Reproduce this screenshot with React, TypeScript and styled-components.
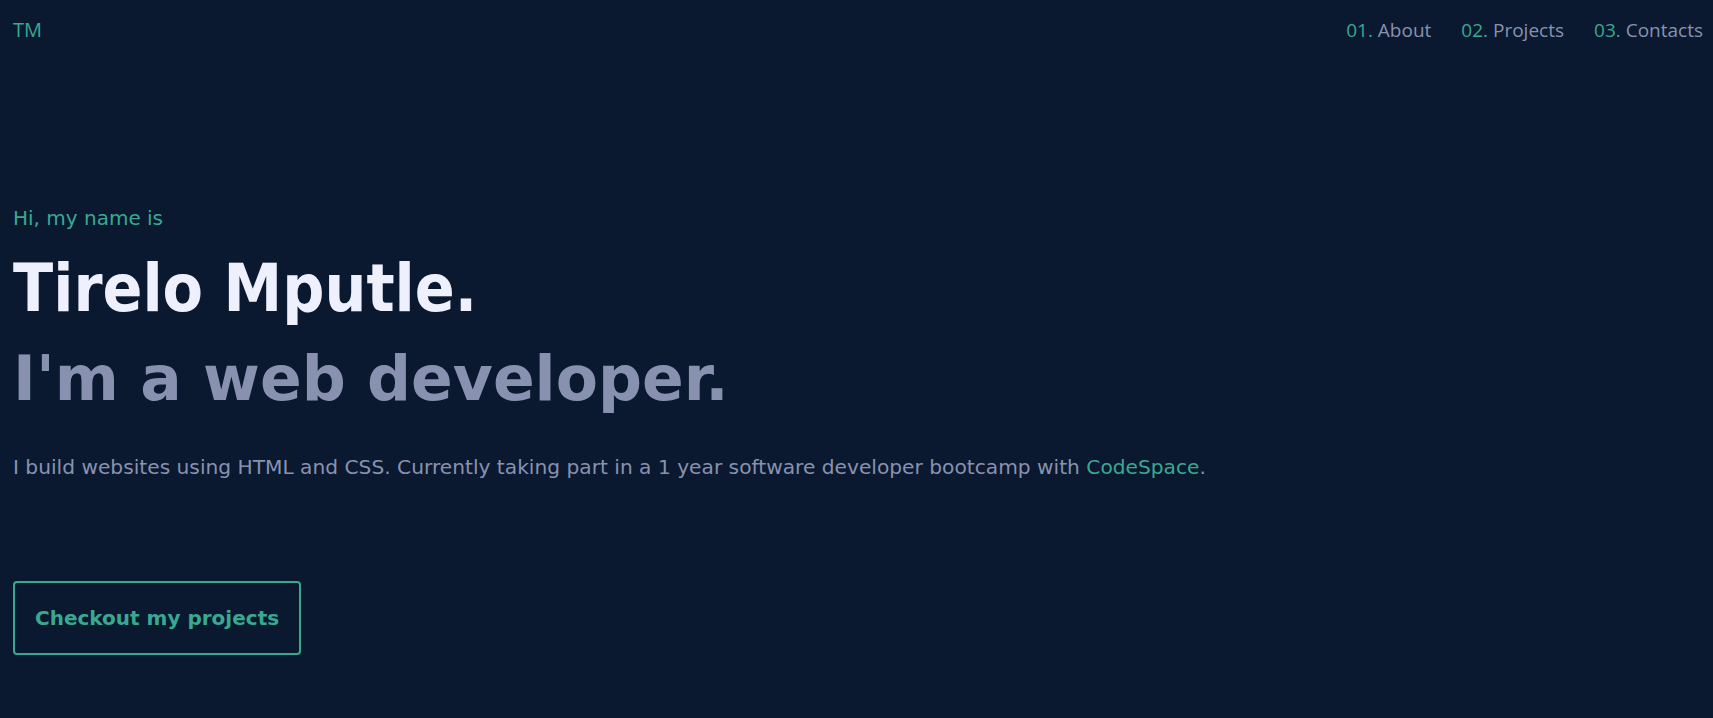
import React from 'react';
import styled, { createGlobalStyle } from 'styled-components';

const pallette = {
  navy: '#0a192f',
  green: '#3aa891',
  slate: '#8892b0',
  white: '#eef0fd',
};

const GlobalStyle = createGlobalStyle`
  html, body {
    margin: 0;
    padding: 0;
    background: ${pallette.navy};
  }
  body {
    font-family: 'DejaVu Sans', Verdana, sans-serif;
    min-height: 718px;
  }
`;

const Page = styled.div`
  min-height: 718px;
  background: ${pallette.navy};
  padding: 0 10px 0 13px;
  box-sizing: border-box;
`;

const Header = styled.header`
  display: flex;
  justify-content: space-between;
  align-items: baseline;
  padding-top: 16px;
`;

const Logo = styled.a`
  font-family: 'Open Sans', 'Noto Sans', sans-serif;
  font-size: 20px;
  color: ${pallette.green};
  text-decoration: none;
`;

const Nav = styled.nav`
  display: flex;
  gap: 30px;
`;

const NavLink = styled.a`
  font-family: 'Open Sans', 'Noto Sans', sans-serif;
  font-size: 19px;
  color: ${pallette.slate};
  text-decoration: none;

  span {
    color: ${pallette.green};
  }
`;

const Hero = styled.section`
  display: flex;
  flex-direction: column;
  align-items: flex-start;
  padding-top: 163px;
`;

const Intro = styled.p`
  margin: 0;
  font-size: 20px;
  color: ${pallette.green};
`;

const Name = styled.h1`
  margin: 20px 0 0;
  font-family: 'DejaVu Sans Condensed', 'DejaVu Sans', sans-serif;
  font-stretch: condensed;
  font-weight: bold;
  font-size: 65.5px;
  color: ${pallette.white};
`;

const Tagline = styled.h2`
  margin: 17px 0 0;
  font-weight: bold;
  font-size: 61.5px;
  color: ${pallette.slate};
`;

const Blurb = styled.p`
  margin: 40px 0 0;
  font-size: 20.2px;
  color: ${pallette.slate};

  a {
    color: ${pallette.green};
    text-decoration: none;
  }
`;

const Button = styled.a`
  margin-top: 102px;
  display: inline-block;
  padding: 23px 20px;
  line-height: 24px;
  border: 2px solid ${pallette.green};
  border-radius: 4px;
  font-weight: bold;
  font-size: 20px;
  color: ${pallette.green};
  text-decoration: none;
`;

const links = [
  { num: '01.', label: 'About' },
  { num: '02.', label: 'Projects' },
  { num: '03.', label: 'Contacts' },
];

const App = () => {
  return (
    <>
      <GlobalStyle />
      <Page>
        <Header>
          <Logo href="#">TM</Logo>
          <Nav>
            {links.map((l) => (
              <NavLink key={l.label} href="#">
                <span>{l.num}</span> {l.label}
              </NavLink>
            ))}
          </Nav>
        </Header>
        <Hero>
          <Intro>Hi, my name is</Intro>
          <Name>Tirelo Mputle.</Name>
          <Tagline>I'm a web developer.</Tagline>
          <Blurb>
            I build websites using HTML and CSS. Currently taking part in a 1
            year software developer bootcamp with <a href="#">CodeSpace</a>.
          </Blurb>
          <Button href="#">Checkout my projects</Button>
        </Hero>
      </Page>
    </>
  );
};

export default App;
